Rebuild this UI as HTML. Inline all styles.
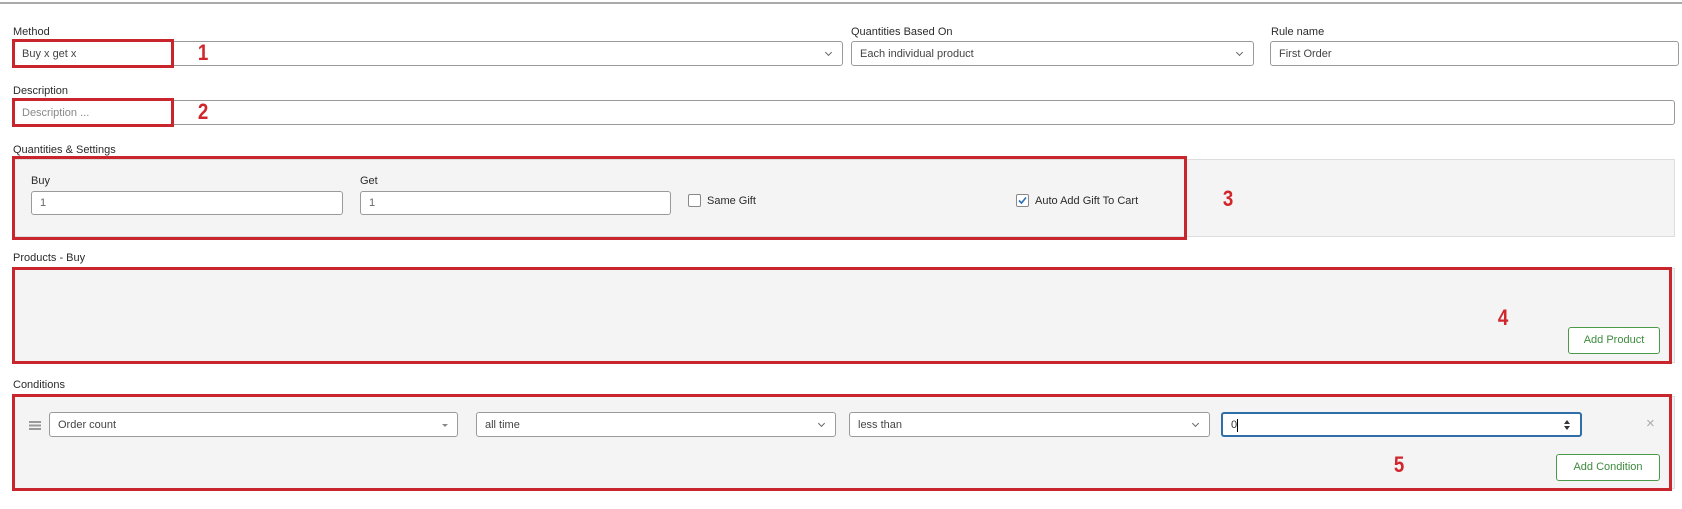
<!DOCTYPE html>
<html><head><meta charset="utf-8"><style>
*{box-sizing:border-box;margin:0;padding:0}
body{width:1682px;height:509px;background:#fff;position:relative;overflow:hidden;font-family:"Liberation Sans",sans-serif;font-size:11px;color:#333}
.a{position:absolute}
.lbl{position:absolute;font-size:11px;color:#2b2b2b;line-height:14px}
.in{position:absolute;background:#fff;border:1px solid #9a9a9a;border-radius:3px;color:#444;font-size:11px;line-height:24px;padding-left:8px}
.gray{position:absolute;background:#f4f4f4;border:1px solid #ddd}
.red{position:absolute;border:3px solid #c8262c}
.num{position:absolute;color:#d0262c;font-weight:bold;font-size:22px;line-height:24px;transform:scaleX(.85)}
.chev{position:absolute;right:11px;top:8px;width:5px;height:5px;border-right:1.2px solid #666;border-bottom:1.2px solid #666;transform:rotate(45deg)}
.btn{position:absolute;border:1px solid #4a9a4a;border-radius:3px;color:#3d8b3d;background:#fff;font-size:11px;text-align:center;line-height:25px}
.cb{position:absolute;width:13px;height:13px;border:1px solid #888;border-radius:2px;background:#fff}
</style></head><body>
<div class="a" style="left:0;top:2px;width:1682px;height:2px;background:#aaa"></div>

<div class="lbl" style="left:13px;top:25px">Method</div>
<div class="in" style="left:13px;top:41px;width:830px;height:25px">Buy x get x<div class="chev"></div></div>
<div class="red" style="left:12px;top:39px;width:162px;height:29px"></div>
<div class="num" style="left:197px;top:41px">1</div>

<div class="lbl" style="left:851px;top:25px">Quantities Based On</div>
<div class="in" style="left:851px;top:41px;width:403px;height:25px">Each individual product<div class="chev"></div></div>
<div class="lbl" style="left:1271px;top:25px">Rule name</div>
<div class="in" style="left:1270px;top:41px;width:409px;height:25px">First Order</div>

<div class="lbl" style="left:13px;top:84px">Description</div>
<div class="in" style="left:13px;top:100px;width:1662px;height:25px;color:#888">Description ...</div>
<div class="red" style="left:12px;top:98px;width:162px;height:29px"></div>
<div class="num" style="left:197px;top:100px">2</div>

<div class="lbl" style="left:13px;top:143px">Quantities &amp; Settings</div>
<div class="gray" style="left:13px;top:159px;width:1662px;height:78px"></div>
<div class="red" style="left:12px;top:156px;width:1175px;height:84px"></div>
<div class="lbl" style="left:31px;top:174px">Buy</div>
<div class="in" style="left:31px;top:191px;width:312px;height:24px;color:#666;line-height:23px">1</div>
<div class="lbl" style="left:360px;top:174px">Get</div>
<div class="in" style="left:360px;top:191px;width:311px;height:24px;color:#666;line-height:23px">1</div>
<div class="cb" style="left:688px;top:194px"></div>
<div class="lbl" style="left:707px;top:194px">Same Gift</div>
<div class="cb" style="left:1016px;top:194px"><svg width="11" height="11" viewBox="0 0 11 11" style="position:absolute;left:0;top:0"><path d="M2 5.5 L4.5 8 L9 2.5" stroke="#2a6fb5" stroke-width="1.6" fill="none"/></svg></div>
<div class="lbl" style="left:1035px;top:194px">Auto Add Gift To Cart</div>
<div class="num" style="left:1222px;top:187px">3</div>

<div class="lbl" style="left:13px;top:251px">Products - Buy</div>
<div class="gray" style="left:13px;top:268px;width:1662px;height:95px"></div>
<div class="red" style="left:12px;top:267px;width:1660px;height:97px"></div>
<div class="num" style="left:1497px;top:306px">4</div>
<div class="btn" style="left:1568px;top:327px;width:92px;height:27px">Add Product</div>

<div class="lbl" style="left:13px;top:378px">Conditions</div>
<div class="gray" style="left:13px;top:396px;width:1662px;height:93px"></div>
<div class="red" style="left:12px;top:394px;width:1660px;height:97px"></div>
<div class="a" style="left:29px;top:421px;width:12px;height:1.5px;background:#999;box-shadow:0 3.5px 0 #999,0 7px 0 #999"></div>
<div class="in" style="left:49px;top:412px;width:409px;height:25px">Order count<div class="a" style="right:9px;top:11px;border-left:3px solid transparent;border-right:3px solid transparent;border-top:3px solid #888"></div></div>
<div class="in" style="left:476px;top:412px;width:360px;height:25px">all time<div class="chev"></div></div>
<div class="in" style="left:849px;top:412px;width:361px;height:25px">less than<div class="chev"></div></div>
<div class="in" style="left:1221px;top:412px;width:361px;height:25px;border:2px solid #2f6ea6;color:#333;line-height:22px">0<span style="display:inline-block;width:1px;height:13px;background:#000;vertical-align:middle"></span>
<div class="a" style="right:10px;top:6px;border-left:3px solid transparent;border-right:3px solid transparent;border-bottom:4px solid #333"></div>
<div class="a" style="right:10px;top:12px;border-left:3px solid transparent;border-right:3px solid transparent;border-top:4px solid #333"></div></div>
<div class="a" style="left:1646px;top:415px;color:#aaa;font-size:15px">×</div>
<div class="num" style="left:1393px;top:453px">5</div>
<div class="btn" style="left:1556px;top:454px;width:104px;height:27px">Add Condition</div>
</body></html>
